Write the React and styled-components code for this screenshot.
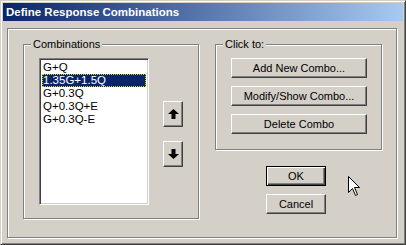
import React from "react";
import styled, { createGlobalStyle, css } from "styled-components";

const Global = createGlobalStyle`
  html, body { margin: 0; padding: 0; background: #d4d0c8; }
  body { font-family: "Liberation Sans", Arial, sans-serif; }
  #root { width: 406px; height: 245px; }
`;

const Window = styled.div`
  position: relative;
  box-sizing: border-box;
  width: 406px;
  height: 245px;
  background: #d4d0c8;
  padding: 3px 3px;
  border-style: solid;
  border-width: 1px;
  border-color: #d4d0c8 #404040 #404040 #d4d0c8;
  box-shadow: inset 1px 1px 0 #ffffff, inset -1px -1px 0 #808080;
  display: flex;
  flex-direction: column;
`;

const TitleBar = styled.div`
  height: 18px;
  margin: -1px -1px 0 -1px;
  background: linear-gradient(to right, #0a246a, #a6caf0);
  color: #ffffff;
  font-family: "Liberation Sans", Arial, sans-serif;
  font-weight: bold;
  font-size: 11.5px;
  line-height: 18px;
  padding-left: 3px;
  white-space: nowrap;
`;

const etched = css`
  border: 1px solid #808080;
  box-shadow: inset 1px 1px 0 #ffffff, 1px 1px 0 #ffffff;
`;

const Frame = styled.div`
  ${etched};
  box-sizing: border-box;
  margin: 7px 0 0 3px;
  width: 390px;
  height: 210px;
  padding: 15px 0 0 15px;
  display: flex;
  gap: 16px;
  align-items: flex-start;
`;

const Group = styled.div`
  ${etched};
  position: relative;
  box-sizing: border-box;
  width: ${(p) => p.$w}px;
  height: ${(p) => p.$h}px;
  padding: ${(p) => p.$pad};
`;

const Legend = styled.span`
  position: absolute;
  top: -7px;
  left: 7px;
  padding: 0 2px;
  background: #d4d0c8;
  font-size: 11px;
  line-height: 12px;
  color: #000;
`;

const ListRow = styled.div`
  display: flex;
  align-items: flex-start;
  gap: 14px;
`;

const ListBox = styled.div`
  box-sizing: border-box;
  width: 110px;
  height: 147px;
  background: #ffffff;
  border-style: solid;
  border-width: 1px;
  border-color: #808080 #ffffff #ffffff #808080;
  box-shadow: inset 1px 1px 0 #404040, inset -1px -1px 0 #d4d0c8;
  padding: 2px 2px;
`;

const Item = styled.div`
  height: 13px;
  line-height: 13px;
  font-size: 11.5px;
  padding-left: 1px;
  white-space: nowrap;
  box-sizing: border-box;
  color: ${(p) => (p.$sel ? "#ffffff" : "#000000")};
  background: ${(p) => (p.$sel ? "#0a246a" : "transparent")};
  outline: ${(p) => (p.$sel ? "1px dotted #d8c87a" : "none")};
  outline-offset: -1px;
`;

const ArrowCol = styled.div`
  display: flex;
  flex-direction: column;
  gap: 14px;
  margin-top: 43px;
`;

const btn3d = css`
  box-sizing: border-box;
  background: #d4d0c8;
  border-style: solid;
  border-width: 1px;
  border-color: #ffffff #404040 #404040 #ffffff;
  box-shadow: inset -1px -1px 0 #808080;
`;

const ArrowButton = styled.div`
  ${btn3d};
  width: 20px;
  height: 26px;
  display: flex;
  align-items: center;
  justify-content: center;
`;

const RightCol = styled.div`
  display: flex;
  flex-direction: column;
  align-items: flex-start;
`;

const ButtonStack = styled.div`
  display: flex;
  flex-direction: column;
  gap: 8px;
  margin: ${(p) => p.$m || "0"};
`;

const Button = styled.div`
  ${btn3d};
  width: ${(p) => p.$w}px;
  height: 20px;
  display: flex;
  align-items: center;
  justify-content: center;
  font-size: 11px;
  color: #000;
  white-space: nowrap;
  ${(p) =>
    p.$default &&
    css`
      border: 1px solid #000000;
      box-shadow: inset 1px 1px 0 #ffffff, inset -1px -1px 0 #404040,
        inset -2px -2px 0 #808080;
    `}
`;

const Cursor = styled.svg`
  position: absolute;
  left: 347px;
  top: 175px;
`;

const Arrow = ({ down }) => (
  <svg width="11" height="10" viewBox="0 0 11 10">
    <path
      d="M5.5 0 L11 5 L7.5 5 L7.5 10 L3.5 10 L3.5 5 L0 5 Z"
      fill="#000"
      transform={down ? "rotate(180 5.5 5)" : undefined}
    />
  </svg>
);

const items = ["G+Q", "1.35G+1.5Q", "G+0.3Q", "Q+0.3Q+E", "G+0.3Q-E"];

export default function App() {
  return (
    <>
      <Global />
      <Window>
        <TitleBar>Define Response Combinations</TitleBar>
        <Frame>
          <Group $w={176} $h={175} $pad="13px 0 0 15px">
            <Legend>Combinations</Legend>
            <ListRow>
              <ListBox>
                {items.map((t, i) => (
                  <Item key={t} $sel={i === 1}>
                    {t}
                  </Item>
                ))}
              </ListBox>
              <ArrowCol>
                <ArrowButton>
                  <Arrow />
                </ArrowButton>
                <ArrowButton>
                  <Arrow down />
                </ArrowButton>
              </ArrowCol>
            </ListRow>
          </Group>
          <RightCol>
            <Group $w={167} $h={106} $pad="13px 0 0 15px">
              <Legend>Click to:</Legend>
              <ButtonStack>
                <Button $w={136}>Add New Combo...</Button>
                <Button $w={136}>Modify/Show Combo...</Button>
                <Button $w={136}>Delete Combo</Button>
              </ButtonStack>
            </Group>
            <ButtonStack $m="16px 0 0 51px">
              <Button $w={60} $default>
                OK
              </Button>
              <Button $w={60}>Cancel</Button>
            </ButtonStack>
          </RightCol>
        </Frame>
        <Cursor width="13" height="21" viewBox="0 0 13 21">
          <path
            d="M0.5 0.5 L0.5 16.5 L4.5 12.5 L7.5 19.5 L9.5 18.5 L6.5 11.5 L11.5 11.5 Z"
            fill="#fff"
            stroke="#000"
            strokeWidth="1"
          />
        </Cursor>
      </Window>
    </>
  );
}
